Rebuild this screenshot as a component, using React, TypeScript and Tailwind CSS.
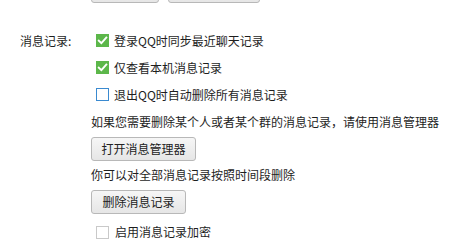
import React from "react";

const font = { fontFamily: '"Noto Sans CJK SC", "Noto Sans", sans-serif' };

function Check({ state }: { state: "on" | "off-blue" | "off-gray" }) {
  if (state === "on") {
    return (
      <span className="flex h-[13px] w-[13px] shrink-0 items-center justify-center bg-[#5cb74a]">
        <svg width="11" height="11" viewBox="0 0 11 11">
          <path d="M1.8 5.6 L4.4 8.1 L9.3 2.6" fill="none" stroke="#ffffff" strokeWidth="1.9" strokeLinecap="square" />
        </svg>
      </span>
    );
  }
  return (
    <span
      className={
        state === "off-blue"
          ? "block h-[13px] w-[13px] shrink-0 border border-[#3a8ad0] bg-white"
          : "block h-[13px] w-[13px] shrink-0 border border-[#c9c9c9] bg-white"
      }
    />
  );
}

function Btn({ children, w }: { children: React.ReactNode; w: string }) {
  return (
    <div
      className={`flex h-[24px] ${w} items-center justify-center rounded-[3px] border border-[#b8b8b8] bg-gradient-to-b from-[#f6f6f6] to-[#e6e6e6] text-[12px] text-[#222]`}
    >
      {children}
    </div>
  );
}

export default function App() {
  return (
    <div className="h-[251px] w-[462px] overflow-hidden bg-white text-[12px] leading-none text-[#1e1e1e]" style={font}>
      <div className="-mt-[21px] ml-[91px] flex gap-[9px]">
        <Btn w="w-[68px]">{""}</Btn>
        <Btn w="w-[92px]">{""}</Btn>
      </div>
      <div className="mt-[24px] flex">
        <div className="w-[91px] pl-[20px]">
          <div className="flex h-[27px] items-center">消息记录:</div>
        </div>
        <div className="flex flex-col">
          <div className="flex h-[27px] items-center gap-[5px] pl-[5px]">
            <Check state="on" />
            <span>登录QQ时同步最近聊天记录</span>
          </div>
          <div className="flex h-[27px] items-center gap-[5px] pl-[5px]">
            <Check state="on" />
            <span>仅查看本机消息记录</span>
          </div>
          <div className="flex h-[27px] items-center gap-[5px] pl-[5px]">
            <Check state="off-blue" />
            <span>退出QQ时自动删除所有消息记录</span>
          </div>
          <div className="flex h-[27px] items-center">如果您需要删除某个人或者某个群的消息记录，请使用消息管理器</div>
          <div className="mt-[2px]">
            <Btn w="w-[105px]">打开消息管理器</Btn>
          </div>
          <div className="flex h-[28px] items-center">你可以对全部消息记录按照时间段删除</div>
          <div className="mt-[1px]">
            <Btn w="w-[95px]">删除消息记录</Btn>
          </div>
          <div className="mt-[10px] flex h-[16px] items-center gap-[6px] pl-[5px]">
            <Check state="off-gray" />
            <span>启用消息记录加密</span>
          </div>
        </div>
      </div>
    </div>
  );
}
